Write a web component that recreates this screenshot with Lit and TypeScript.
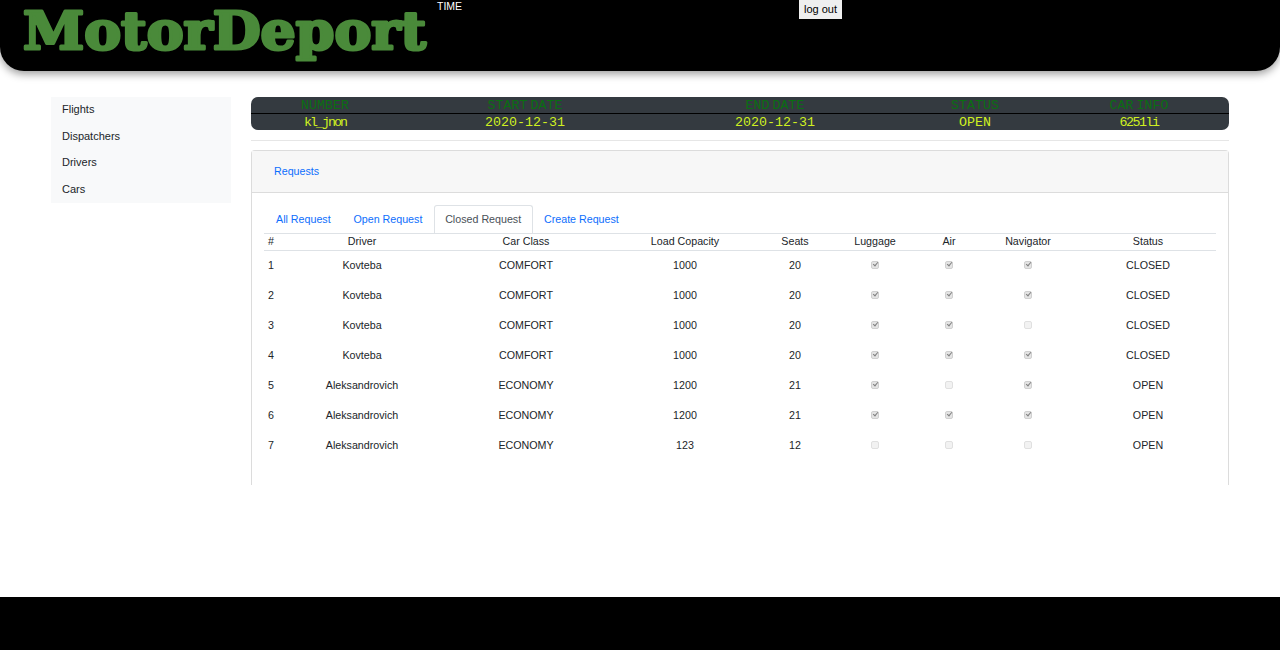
import { LitElement, html, css } from "lit";
import { customElement } from "lit/decorators.js";

const rows = [
  [1, "Kovteba", "COMFORT", 1000, 20, true, true, true, "CLOSED"],
  [2, "Kovteba", "COMFORT", 1000, 20, true, true, true, "CLOSED"],
  [3, "Kovteba", "COMFORT", 1000, 20, true, true, false, "CLOSED"],
  [4, "Kovteba", "COMFORT", 1000, 20, true, true, true, "CLOSED"],
  [5, "Aleksandrovich", "ECONOMY", 1200, 21, true, false, true, "OPEN"],
  [6, "Aleksandrovich", "ECONOMY", 1200, 21, true, true, true, "OPEN"],
  [7, "Aleksandrovich", "ECONOMY", 123, 12, false, false, false, "OPEN"],
];

@customElement("app-root")
export class AppRoot extends LitElement {
  static styles = css`
    :host {
      display: flex;
      flex-direction: column;
      height: 650px;
      font-family: "Liberation Sans", Arial, sans-serif;
      font-size: 11px;
      color: #212529;
      background: #fff;
      overflow: hidden;
    }
    .top {
      height: 71px;
      flex: none;
      background: #000;
      border-radius: 0 0 24px 24px;
      box-shadow: 0 3px 9px rgba(0, 0, 0, 0.4);
      display: flex;
      align-items: flex-start;
    }
    .logo {
      width: 437px;
      height: 71px;
      flex: none;
      display: block;
    }
    .logo text {
      font-family: "DejaVu Serif", serif;
      font-weight: 700;
      font-size: 52px;
      fill: #4a8a3a;
      stroke: #4a8a3a;
      stroke-width: 3px;
      stroke-linejoin: round;
    }
    .time {
      width: 362px;
      color: #fff;
      font-size: 10.5px;
      line-height: 13px;
    }
    .logout {
      width: 43px;
      height: 19px;
      padding: 0 0 2px;
      border: none;
      background: #efefef;
      color: #000;
      font: 11px "Liberation Sans", Arial, sans-serif;
    }
    .main {
      flex: 1;
      display: flex;
      gap: 20px;
      padding: 26px 51px 0;
    }
    .side {
      width: 180px;
      height: 106px;
      flex: none;
      background: #f8f9fa;
    }
    .side a {
      display: block;
      height: 26.7px;
      line-height: 25px;
      padding-left: 11px;
      color: #212529;
    }
    .content {
      width: 978px;
    }
    .info {
      background: #343a40;
      border-radius: 7px;
      overflow: hidden;
      font-family: "Liberation Mono", monospace;
      font-size: 13.3px;
    }
    .info .row {
      display: grid;
      grid-template-columns: 148px 252px 248px 152px 176px;
      height: 16px;
      line-height: 17px;
      text-align: center;
      color: #d0f020;
    }
    .info .row.head {
      height: 17px;
      border-bottom: 1px solid #000;
      box-sizing: border-box;
      color: #0a6e12;
      word-spacing: -5px;
    }
    .tight {
      letter-spacing: -2px;
    }
    .tighter {
      letter-spacing: -1.5px;
    }
    .rule {
      height: 1px;
      background: #e6e6e6;
      margin: 10px 0 9px;
    }
    .card {
      height: 335px;
      box-sizing: border-box;
      border: 1px solid #dcdcdc;
      border-bottom: none;
      border-radius: 4px 4px 0 0;
      font-size: 10.7px;
    }
    .card-head {
      height: 42px;
      box-sizing: border-box;
      background: #f7f7f7;
      border-bottom: 1px solid #dcdcdc;
      padding-left: 22px;
      line-height: 40px;
      color: #0d6efd;
    }
    .card-body {
      padding: 12px 12px 0;
    }
    .tabs {
      display: flex;
      height: 28px;
    }
    .tabs a {
      padding: 0 11.4px;
      line-height: 28px;
      color: #0d6efd;
      box-sizing: border-box;
    }
    .tabs a:first-child {
      padding-left: 12px;
    }
    .tabs a.active {
      color: #495057;
      background: #fff;
      border: 1px solid #dee2e6;
      border-bottom: none;
      border-radius: 3px 3px 0 0;
      padding: 0 10.4px;
      line-height: 26px;
    }
    table {
      width: 952px;
      border-collapse: collapse;
      table-layout: fixed;
      text-align: center;
    }
    th {
      box-sizing: border-box;
      font-weight: 400;
      height: 17px;
      padding: 0 0 2px;
      border-top: 1px solid #dee2e6;
      border-bottom: 1px solid #dee2e6;
    }
    th:first-child {
      text-align: left;
      padding-left: 4px;
    }
    td {
      box-sizing: border-box;
      height: 30px;
      padding: 0 0 2px;
    }
    td:first-child {
      text-align: left;
      padding-left: 4px;
    }
    input {
      appearance: none;
      position: relative;
      box-sizing: border-box;
      width: 8px;
      height: 8px;
      margin: 0 0 2px;
      vertical-align: middle;
      background: #f2f2f2;
      border: 1px solid #e0e0e0;
      border-radius: 2px;
    }
    input:checked {
      background: #e4e4e4;
      border-color: #d0d0d0;
    }
    input:checked::after {
      content: "";
      position: absolute;
      left: 1.5px;
      top: -0.5px;
      width: 2px;
      height: 4px;
      border: solid #808080;
      border-width: 0 1.2px 1.2px 0;
      transform: rotate(40deg);
    }
    .bottom {
      height: 53px;
      flex: none;
      background: #000;
    }
  `;

  render() {
    return html`
      <div class="top">
        <svg class="logo" viewBox="0 0 437 71">
          <text x="23" y="49" textLength="403" lengthAdjust="spacingAndGlyphs">MotorDeport</text>
        </svg>
        <div class="time">TIME</div>
        <button class="logout">log out</button>
      </div>
      <div class="main">
        <nav class="side">
          <a>Flights</a><a>Dispatchers</a><a>Drivers</a><a>Cars</a>
        </nav>
        <div class="content">
          <div class="info">
            <div class="row head">
              <span>NUMBER</span><span>START DATE</span><span>END DATE</span><span>STATUS</span><span>CAR INFO</span>
            </div>
            <div class="row">
              <span class="tight">kl_jnon</span><span>2020-12-31</span><span>2020-12-31</span><span>OPEN</span><span class="tighter">6251li</span>
            </div>
          </div>
          <div class="rule"></div>
          <div class="card">
            <div class="card-head">Requests</div>
            <div class="card-body">
              <div class="tabs">
                <a>All Request</a><a>Open Request</a><a class="active">Closed Request</a><a>Create Request</a>
              </div>
              <table>
                <colgroup>
                  <col style="width:16px" /><col style="width:164px" /><col style="width:164px" />
                  <col style="width:154px" /><col style="width:66px" /><col style="width:94px" />
                  <col style="width:54px" /><col style="width:104px" /><col style="width:136px" />
                </colgroup>
                <thead>
                  <tr>
                    <th>#</th><th>Driver</th><th>Car Class</th><th>Load Copacity</th><th>Seats</th>
                    <th>Luggage</th><th>Air</th><th>Navigator</th><th>Status</th>
                  </tr>
                </thead>
                <tbody>
                  ${rows.map(
                    (r) => html`<tr>
                      <td>${r[0]}</td>
                      <td>${r[1]}</td>
                      <td>${r[2]}</td>
                      <td>${r[3]}</td>
                      <td>${r[4]}</td>
                      <td><input type="checkbox" disabled .checked=${r[5] as boolean} /></td>
                      <td><input type="checkbox" disabled .checked=${r[6] as boolean} /></td>
                      <td><input type="checkbox" disabled .checked=${r[7] as boolean} /></td>
                      <td>${r[8]}</td>
                    </tr>`
                  )}
                </tbody>
              </table>
            </div>
          </div>
        </div>
      </div>
      <div class="bottom"></div>
    `;
  }
}
